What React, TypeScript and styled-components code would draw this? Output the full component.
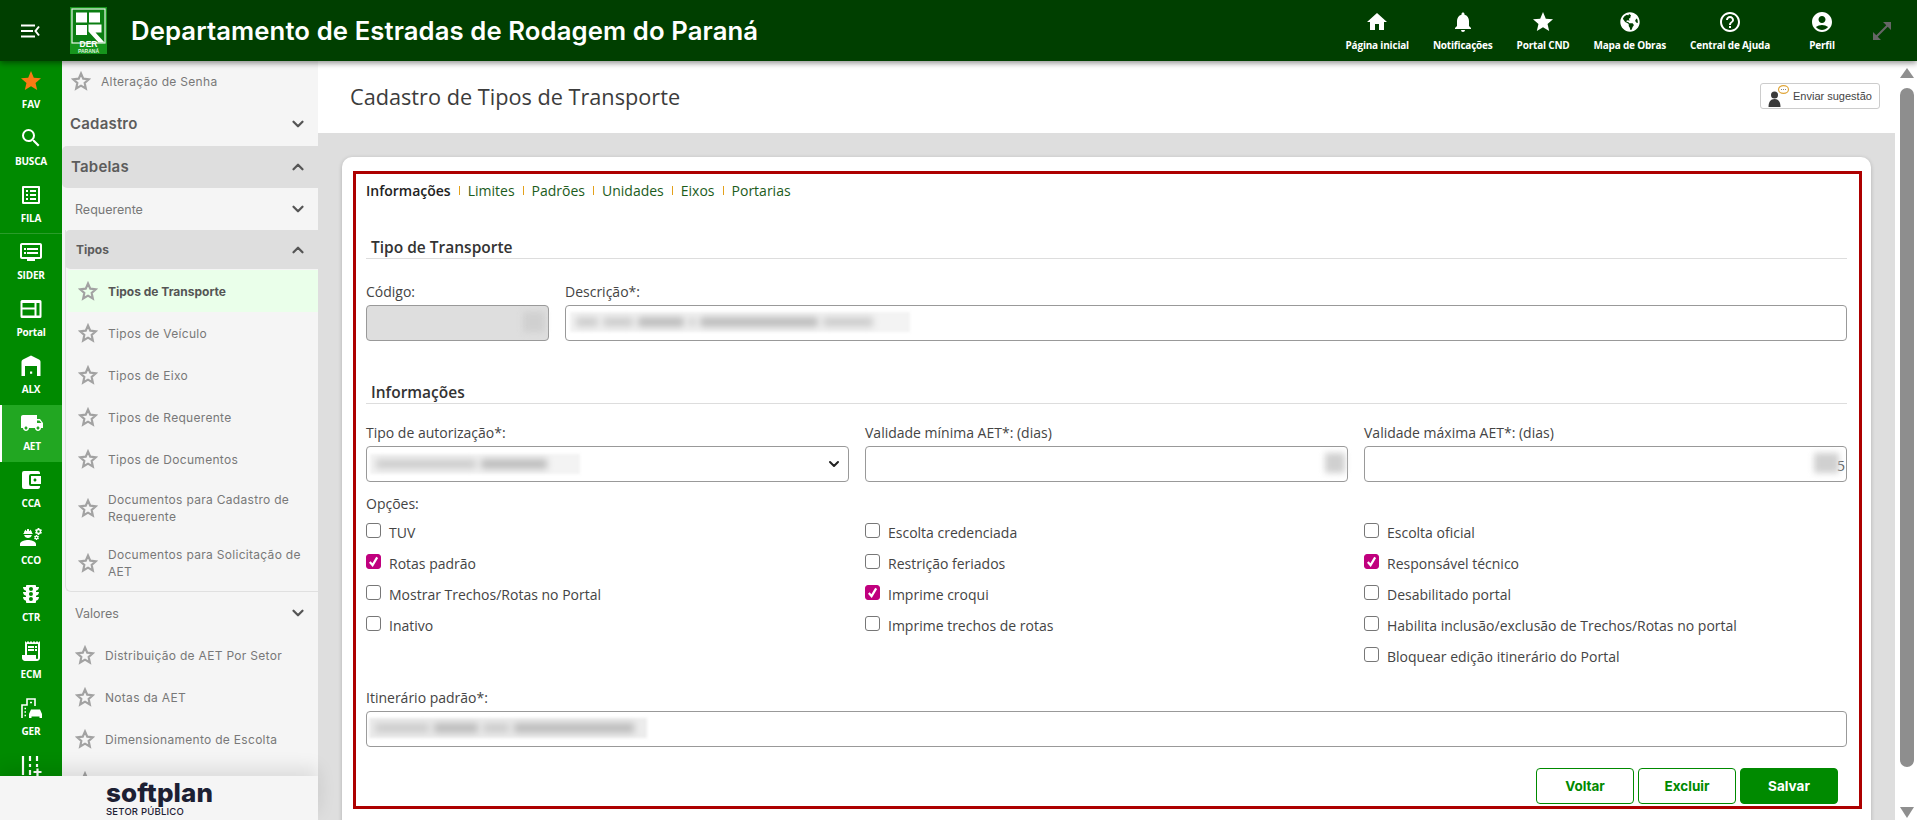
import React from "react";
import styled, { createGlobalStyle } from "styled-components";
import { ChevronDown, ChevronUp } from "lucide-react";
import {
  MdHome, MdNotifications, MdStar, MdHelpOutline, MdAccountCircle, MdOpenInFull,
  MdSearch, MdOutlineListAlt, MdDvr, MdLocalShipping, MdAccountBalanceWallet, MdEngineering, MdTraffic, MdReceiptLong,
} from "react-icons/md";
import { FaGlobeAmericas } from "react-icons/fa";

const GREEN_DARK = "#003f00";
const GREEN = "#008a00";
const SANS = '"Open Sans", "Liberation Sans", sans-serif';
const WIDE = 'Inter, "Open Sans", sans-serif';

const Global = createGlobalStyle`
  html, body { margin: 0; height: 100%; overflow: hidden; background: #fff; }
  * { box-sizing: border-box; }
  body { font-family: ${SANS}; }
`;

const Page = styled.div`
  width: 100%; height: 100vh; display: flex; flex-direction: column; overflow: hidden;
`;
const Header = styled.header`
  height: 61px; flex: none; background: ${GREEN_DARK}; display: flex; align-items: center;
  padding-right: 23px; position: relative; z-index: 5; box-shadow: 0 2px 6px rgba(0,0,0,.45);
`;
const MenuButton = styled.div`
  width: 70px; padding-left: 20px; display: flex; align-items: center; flex: none;
`;
const Brand = styled.h1`
  margin: 0 0 0 24px; font: 600 25.7px/30px ${WIDE}; color: #fff; white-space: nowrap; letter-spacing: 0.1px; flex: 1;
`;
const TopNav = styled.nav`
  display: flex; align-items: flex-start; gap: 24px;
`;
const TopItem = styled.div<{ $wide?: boolean }>`
  display: flex; flex-direction: column; align-items: center; color: #fff;
  min-width: ${p => (p.$wide ? "64px" : "0")}; margin-left: ${p => (p.$wide ? "-4px" : "0")};
  svg { display: block; height: 24px; width: 24px; }
`;
const TopLabel = styled.span`
  font: 700 10px/14px ${SANS}; margin-top: 4px; white-space: nowrap; letter-spacing: -0.2px;
`;
const ExpandIcon = styled.div`
  margin-left: 16px; color: #666; display: flex;
`;
const Body = styled.div`
  flex: 1; min-height: 0; display: flex;
`;
const LeftCol = styled.aside`
  width: 318px; flex: none; display: flex; flex-direction: column; background: #f5f5f5;
`;
const LeftTop = styled.div`
  flex: 1; min-height: 0; display: flex; overflow: hidden;
`;
const Rail = styled.div`
  width: 62px; flex: none; background: ${GREEN}; padding-top: 2px; display: flex; flex-direction: column;
`;
const RailItem = styled.div<{ $active?: boolean; $sep?: boolean }>`
  height: 57px; flex: none; display: flex; flex-direction: column; align-items: center; padding-top: 6px;
  color: #fff; background: ${p => (p.$active ? "#22a722" : "transparent")};
  border-left: ${p => (p.$active ? "2px solid #fff" : "0")};
  border-bottom: ${p => (p.$sep ? "1px solid #2a9c2a" : "0")};
  svg { display: block; width: 24px; height: 24px; }
`;
const RailLabel = styled.span`
  font: 700 10px/12px ${SANS}; margin-top: 5px; letter-spacing: -0.2px;
`;
const Nav = styled.nav`
  flex: 1; min-width: 0; background: #f5f5f5; color: #777;
`;
const StarWrap = styled.span`
  flex: none; display: flex; margin-right: 10px; color: #a2a2a2;
`;
const NavRow = styled.div<{ $h?: number; $pad?: number; $selected?: boolean }>`
  height: ${p => p.$h ?? 42}px; display: flex; align-items: center; padding-left: ${p => p.$pad ?? 11}px;
  padding-right: 8px; font: ${p => (p.$selected ? 700 : 400)} 12px/17px ${WIDE}; letter-spacing: ${p => (p.$selected ? "0" : "0.3px")};
  color: ${p => (p.$selected ? "#555" : "#787878")};
  background: ${p => (p.$selected ? "#eaffea" : "transparent")};
`;
const FirstRow = styled(NavRow)`
  padding-bottom: 2px;
`;
const NavHead = styled.div<{ $h: number; $big?: boolean; $open?: boolean; $pad: number; $strong?: boolean; $lift?: number }>`
  height: ${p => p.$h}px; display: flex; align-items: center; justify-content: space-between;
  padding: 0 11px ${p => p.$lift ?? 0}px ${p => p.$pad}px;
  background: ${p => (p.$open ? "#dedede" : "transparent")};
  border-radius: ${p => (p.$open ? "5px 0 0 5px" : "0")};
  color: ${p => (p.$big || p.$strong ? "#5c5c5c" : "#787878")};
  font: ${p => (p.$big ? "600 15px/20px" : p.$strong ? "700 12px/17px" : "400 12.5px/17px")} ${WIDE};
  letter-spacing: ${p => (p.$big ? "0.2px" : "0")};
  svg { color: #555; flex: none; }
`;
const Indented = styled.div`
  margin-left: 2px;
`;
const Group = styled.div`
  margin-left: 1px; border-left: 1px solid #e0e0e0; border-bottom: 1px solid #e0e0e0;
  border-bottom-left-radius: 6px; padding: 0 0 1px 2px;
`;
const GroupHead = styled.div`
  margin-left: -3px; padding-bottom: 1px;
`;
const Footer = styled.div`
  height: 44px; flex: none; background: #f5f5f5; padding: 5px 0 0 106px; position: relative; z-index: 2;
  box-shadow: 0 -8px 18px rgba(0,0,0,.1);
`;
const LogoWord = styled.div`
  font: 800 26px/24px ${WIDE}; color: #1c2033; letter-spacing: 0.1px; height: 24px;
`;
const LogoSub = styled.div`
  font: 500 9.5px/12px ${WIDE}; color: #1c2033; letter-spacing: 0.2px; margin-top: 1px;
`;
const Main = styled.main`
  flex: 1; min-width: 0; display: flex;
`;
const Content = styled.div`
  flex: 1; min-width: 0; display: flex; flex-direction: column; overflow: hidden;
`;
const TitleBand = styled.div`
  height: 72px; flex: none; display: flex; align-items: center; justify-content: space-between; background: #fff;
  padding: 0 15px 0 32px;
`;
const PageTitle = styled.h2`
  margin: 0; font: 500 21.7px/28px ${SANS}; color: #3c3c3c;
`;
const SuggestButton = styled.button`
  width: 120px; height: 26px; margin-top: -2px; display: flex; align-items: center; gap: 2px; padding: 0 0 0 6px;
  background: #fff; border: 1px solid #ccc; border-radius: 3px; color: #444;
  font: 400 11px/14px "Liberation Sans", Arial, sans-serif; white-space: nowrap;
`;
const GrayArea = styled.div`
  flex: 1; min-height: 0; background: #dedede; padding: 24px 24px 0;
`;
const Card = styled.section`
  background: #fff; border-radius: 10px 10px 0 0; padding: 14px 9px 30px 11px; box-shadow: 0 1px 4px rgba(0,0,0,.2);
`;
const RedBox = styled.div`
  border: 3px solid #ad0000; padding: 7px 12px 2px 10px;
`;
const Tabs = styled.div`
  display: flex; align-items: center; height: 20px; font: 400 14px/20px ${SANS};
`;
const Tab = styled.span<{ $active?: boolean }>`
  color: ${p => (p.$active ? "#222" : "#1c5c1c")}; font-weight: ${p => (p.$active ? 600 : 400)};
`;
const TabSep = styled.span`
  width: 1px; height: 9px; background: #e4a11b; margin: 0 8px; position: relative; top: -1px;
`;
const SectionTitle = styled.h3<{ $top: number }>`
  margin: ${p => p.$top}px 0 0; height: 23px; padding-left: 5px; border-bottom: 1px solid #ddd;
  font: 600 15.5px/22px ${SANS}; color: #333;
`;
const Row = styled.div`
  display: flex; gap: 16px;
`;
const ThreeCols = styled.div`
  display: grid; grid-template-columns: repeat(3, 1fr); gap: 16px;
`;
const Field = styled.div<{ $w?: number; $flex?: boolean; $top?: number }>`
  width: ${p => (p.$w ? `${p.$w}px` : "auto")}; flex: ${p => (p.$flex ? 1 : "none")}; min-width: 0;
  margin-top: ${p => p.$top ?? 0}px;
`;
const Label = styled.label`
  display: block; font: 400 14px/20px ${SANS}; color: #444; height: 23px; white-space: nowrap;
`;
const InputWrap = styled.div`
  position: relative; height: 36px;
`;
const Input = styled.input<{ $disabled?: boolean }>`
  width: 100%; height: 36px; display: block; border: 1px solid #999; border-radius: 4px; outline: 0; padding: 2px 1px 0 8px;
  background: ${p => (p.$disabled ? "#dedede" : "#fff")}; font: 400 14px/20px ${SANS}; color: #555; text-align: right;
`;
const SelectBox = styled.div`
  height: 36px; border: 1px solid #999; border-radius: 4px; display: flex; align-items: center; justify-content: space-between;
  padding: 0 6px 0 3px; color: #222; position: relative;
`;
const Smudge = styled.div<{ $left?: number; $right?: number; $w: number; $bg?: string; $soft?: boolean }>`
  position: absolute; top: 7px; height: 20px; width: ${p => p.$w}px;
  left: ${p => (p.$left !== undefined ? `${p.$left}px` : "auto")};
  right: ${p => (p.$right !== undefined ? `${p.$right}px` : "auto")};
  background: ${p => p.$bg ?? "#f3f3f3"}; display: flex; align-items: center; gap: 5px; padding: 0 6px; overflow: hidden;
  filter: blur(${p => (p.$soft ? 3 : 1.5)}px);
`;
const Blot = styled.span<{ $w: number; $dark?: boolean }>`
  flex: none; width: ${p => p.$w}px; height: 10px; background: ${p => (p.$dark ? "#bdbdbd" : "#cecece")}; filter: blur(3px);
`;
const Check = styled.div`
  height: 31px; display: flex; align-items: center; font: 400 14px/20px ${SANS}; color: #444;
`;
const Box = styled.span<{ $on?: boolean }>`
  width: 15px; height: 15px; flex: none; margin: -5px 8px 0 0; border-radius: 3px;
  border: 1px solid ${p => (p.$on ? "#c0007e" : "#777")}; background: ${p => (p.$on ? "#c0007e" : "#fff")};
  display: flex; align-items: center; justify-content: center;
`;
const Actions = styled.div`
  display: flex; justify-content: flex-end; gap: 4px; margin: 21px 9px 0 0;
`;
const ActionButton = styled.button<{ $primary?: boolean }>`
  width: 98px; height: 36px; border: 1px solid ${GREEN}; border-radius: 4px; padding: 0;
  background: ${p => (p.$primary ? GREEN : "#fff")}; color: ${p => (p.$primary ? "#fff" : GREEN)};
  font: 700 13.5px/18px ${WIDE};
`;
const Scrollbar = styled.div`
  width: 22px; flex: none; background: #fff; display: flex; flex-direction: column; align-items: flex-start; padding: 7px 0 2px 5px;
`;
const ArrowUp = styled.span`
  width: 0; height: 0; border: 7.5px solid transparent; border-top: 0; border-bottom: 10px solid #8f8f8f;
`;
const ArrowDown = styled.span`
  width: 0; height: 0; border: 7.5px solid transparent; border-bottom: 0; border-top: 11px solid #8f8f8f; margin-top: auto;
`;
const Thumb = styled.div`
  width: 14px; height: 679px; margin-top: 10px; border-radius: 7px; background: #8e8e8e;
`;

const Star = () => (
  <svg width="20" height="20" viewBox="0 0 24 24" fill="none" stroke="currentColor" strokeWidth="2.6" strokeLinejoin="miter">
    <polygon points="12,3 14.7,9.2 21.4,9.9 16.4,14.4 17.8,21 12,17.6 6.2,21 7.6,14.4 2.6,9.9 9.3,9.2" />
  </svg>
);

const MenuIcon = () => (
  <svg width="20" height="16" viewBox="0 0 20 16" fill="none" stroke="#fff" strokeWidth="2">
    <path d="M1 2.5h14M1 8h12M1 13.5h14" />
    <path d="M19 3.5 15.5 8l3.5 4.5" />
  </svg>
);

const DerLogo = () => (
  <svg width="37" height="47" viewBox="0 0 37 47" style={{ flex: "none" }}>
    <rect width="37" height="47" fill="#16951c" />
    <rect x="2" y="2" width="33" height="34" fill="#0b7d12" stroke="#e8f6e8" strokeWidth="1.2" />
    <rect x="6" y="5.500" width="11" height="10" fill="#fff" />
    <rect x="19" y="5.500" width="11" height="10" fill="#fff" />
    <rect x="6" y="18" width="11" height="10" fill="#fff" />
    <path d="M18.500 17.500h13v8h-6l9 10h-6l-10-11z" fill="#fff" />
    <text x="18.5" y="40" textAnchor="middle" fontFamily="Liberation Sans" fontWeight="700" fontSize="8.5" fill="#fff">DER</text>
    <text x="18.5" y="46" textAnchor="middle" fontFamily="Liberation Sans" fontWeight="700" fontSize="5" fill="#dff2df">PARANÁ</text>
  </svg>
);

const PortalIcon = () => (
  <svg viewBox="0 0 24 24" fill="#fff">
    <path fillRule="evenodd" d="M3 3h18a1.500 1.500 0 0 1 1.500 1.500v15A1.500 1.500 0 0 1 21 21H3a1.500 1.500 0 0 1-1.500-1.500v-15A1.500 1.500 0 0 1 3 3zm.500 3v4.500h12V6zm0 6.500v6h12v-6zm14-6.500v12.500h3V6z" />
  </svg>
);
const WarehouseIcon = () => (
  <svg viewBox="0 0 24 24" fill="#fff">
    <path fillRule="evenodd" d="M12 1.500 20 5.500c1 .5 1.500 1.500 1.500 2.500v14h-3.500v-10H6v10H2.500V8c0-1 .5-2 1.500-2.500zM11 17.500h2.200v2.200H11z" />
  </svg>
);
const GerIcon = () => (
  <svg viewBox="0 0 24 24" fill="none" stroke="#fff" strokeWidth="1.6">
    <path d="M3 22V9h5V3h8v7" />
    <path d="M5.500 12.500h1.500M5.500 16h1.500M5.500 19.500h1.500M11 6.500h2" />
    <path fill="#fff" stroke="none" d="M12 13.500h9l2 4.500v4h-2.500v-1.500h-8V22H10v-4z" />
  </svg>
);
const SlidersIcon = () => (
  <svg viewBox="0 0 24 24" fill="none" stroke="#fff" strokeWidth="2.200">
    <path d="M4 3v19M11 3v5M11 11v3M11 17v5M18 3v5M18 11v3M14.500 19h8M18.500 15.500v8" />
  </svg>
);
const SuggestIcon = () => (
  <svg width="24" height="24" viewBox="0 0 24 24" style={{ flex: "none" }}>
    <circle cx="7.500" cy="11" r="3.500" fill="#3a3a3a" />
    <path d="M1.500 23c0-5 2-8 6-8s6 3 6 8z" fill="#3a3a3a" />
    <ellipse cx="16.500" cy="5.500" rx="5" ry="3.800" fill="#fff" stroke="#e0a63a" strokeWidth="1.200" />
    <path d="M14 5.500h5" stroke="#888" strokeWidth="1" strokeDasharray="1 1" />
  </svg>
);
const CheckMark = () => (
  <svg width="11" height="11" viewBox="0 0 12 12" fill="none" stroke="#fff" strokeWidth="2.400">
    <path d="M2 6.500 5 10l5-8.500" />
  </svg>
);

const topItems = [
  { label: "Página inicial", icon: <MdHome /> },
  { label: "Notificações", icon: <MdNotifications /> },
  { label: "Portal CND", icon: <MdStar /> },
  { label: "Mapa de Obras", icon: <FaGlobeAmericas style={{ padding: 2 }} /> },
  { label: "Central de Ajuda", icon: <MdHelpOutline /> },
  { label: "Perfil", icon: <MdAccountCircle />, wide: true },
];

const railItems: { label: string; icon: React.ReactNode; sep?: boolean; active?: boolean }[] = [
  { label: "FAV", icon: <MdStar color="#f97a14" /> },
  { label: "BUSCA", icon: <MdSearch /> },
  { label: "FILA", icon: <MdOutlineListAlt />, sep: true },
  { label: "SIDER", icon: <MdDvr /> },
  { label: "Portal", icon: <PortalIcon /> },
  { label: "ALX", icon: <WarehouseIcon /> },
  { label: "AET", icon: <MdLocalShipping />, active: true },
  { label: "CCA", icon: <MdAccountBalanceWallet /> },
  { label: "CCO", icon: <MdEngineering /> },
  { label: "CTR", icon: <MdTraffic /> },
  { label: "ECM", icon: <MdReceiptLong /> },
  { label: "GER", icon: <GerIcon /> },
  { label: "", icon: <SlidersIcon /> },
];

const typeRows = [
  { t: "Tipos de Transporte", selected: true },
  { t: "Tipos de Veículo" },
  { t: "Tipos de Eixo" },
  { t: "Tipos de Requerente" },
  { t: "Tipos de Documentos" },
  { t: "Documentos para Cadastro de Requerente", h: 55 },
  { t: "Documentos para Solicitação de AET", h: 55 },
];

const col1: [string, boolean][] = [["TUV", false], ["Rotas padrão", true], ["Mostrar Trechos/Rotas no Portal", false], ["Inativo", false]];
const col2: [string, boolean][] = [["Escolta credenciada", false], ["Restrição feriados", false], ["Imprime croqui", true], ["Imprime trechos de rotas", false]];
const col3: [string, boolean][] = [["Escolta oficial", false], ["Responsável técnico", true], ["Desabilitado portal", false], ["Habilita inclusão/exclusão de Trechos/Rotas no portal", false], ["Bloquear edição itinerário do Portal", false]];

const CheckColumn = ({ items }: { items: [string, boolean][] }) => (
  <div>
    {items.map(([t, on]) => (
      <Check key={t}>
        <Box $on={on}>{on && <CheckMark />}</Box>
        {t}
      </Check>
    ))}
  </div>
);

export default function App() {
  return (
    <Page>
      <Global />
      <Header>
        <MenuButton><MenuIcon /></MenuButton>
        <DerLogo />
        <Brand>Departamento de Estradas de Rodagem do Paraná</Brand>
        <TopNav>
          {topItems.map(i => (
            <TopItem key={i.label} $wide={i.wide}>
              {i.icon}
              <TopLabel>{i.label}</TopLabel>
            </TopItem>
          ))}
        </TopNav>
        <ExpandIcon><MdOpenInFull size={24} /></ExpandIcon>
      </Header>
      <Body>
        <LeftCol>
          <LeftTop>
            <Rail>
              {railItems.map((r, i) => (
                <RailItem key={i} $active={r.active} $sep={r.sep}>
                  {r.icon}
                  <RailLabel>{r.label}</RailLabel>
                </RailItem>
              ))}
            </Rail>
            <Nav>
              <FirstRow $pad={9}><StarWrap><Star /></StarWrap>Alteração de Senha</FirstRow>
              <NavHead $h={43} $big $pad={8} $lift={2}>Cadastro<ChevronDown size={18} strokeWidth={3} /></NavHead>
              <NavHead $h={42} $big $open $pad={9}>Tabelas<ChevronUp size={18} strokeWidth={3} /></NavHead>
              <NavHead $h={42} $pad={13}>Requerente<ChevronDown size={18} strokeWidth={3} /></NavHead>
              <Indented>
                <Group>
                  <GroupHead>
                    <NavHead $h={39} $open $strong $pad={11}>Tipos<ChevronUp size={18} strokeWidth={3} /></NavHead>
                  </GroupHead>
                  {typeRows.map(r => (
                    <NavRow key={r.t} $h={r.h} $selected={r.selected} $pad={10}>
                      <StarWrap><Star /></StarWrap><span>{r.t}</span>
                    </NavRow>
                  ))}
                </Group>
              </Indented>
              <NavHead $h={42} $pad={13}>Valores<ChevronDown size={18} strokeWidth={3} /></NavHead>
              <NavRow $pad={13}><StarWrap><Star /></StarWrap>Distribuição de AET Por Setor</NavRow>
              <NavRow $pad={13}><StarWrap><Star /></StarWrap>Notas da AET</NavRow>
              <NavRow $pad={13}><StarWrap><Star /></StarWrap>Dimensionamento de Escolta</NavRow>
              <NavRow $pad={13}><StarWrap><Star /></StarWrap></NavRow>
            </Nav>
          </LeftTop>
          <Footer>
            <LogoWord>softplan</LogoWord>
            <LogoSub>SETOR PÚBLICO</LogoSub>
          </Footer>
        </LeftCol>
        <Main>
          <Content>
            <TitleBand>
              <PageTitle>Cadastro de Tipos de Transporte</PageTitle>
              <SuggestButton><SuggestIcon />Enviar sugestão</SuggestButton>
            </TitleBand>
            <GrayArea>
              <Card>
                <RedBox>
                  <Tabs>
                    <Tab $active>Informações</Tab><TabSep />
                    <Tab>Limites</Tab><TabSep />
                    <Tab>Padrões</Tab><TabSep />
                    <Tab>Unidades</Tab><TabSep />
                    <Tab>Eixos</Tab><TabSep />
                    <Tab>Portarias</Tab>
                  </Tabs>
                  <SectionTitle $top={35}>Tipo de Transporte</SectionTitle>
                  <Row>
                    <Field $w={183} $top={23}>
                      <Label>Código:</Label>
                      <InputWrap>
                        <Input $disabled readOnly />
                        <Smudge $right={4} $w={22} $bg="#d0d0d0" $soft />
                      </InputWrap>
                    </Field>
                    <Field $flex $top={23}>
                      <Label>Descrição*:</Label>
                      <InputWrap>
                        <Input readOnly />
                        <Smudge $left={5} $w={340}>
                          <Blot $w={22} /><Blot $w={30} /><Blot $w={46} $dark /><Blot $w={6} /><Blot $w={118} $dark /><Blot $w={50} />
                        </Smudge>
                      </InputWrap>
                    </Field>
                  </Row>
                  <SectionTitle $top={40}>Informações</SectionTitle>
                  <ThreeCols>
                    <Field $top={19}>
                      <Label>Tipo de autorização*:</Label>
                      <SelectBox>
                        <Smudge $left={3} $w={210}>
                          <Blot $w={100} /><Blot $w={66} $dark />
                        </Smudge>
                        <span />
                        <ChevronDown size={16} strokeWidth={3} />
                      </SelectBox>
                    </Field>
                    <Field $top={19}>
                      <Label>Validade mínima AET*: (dias)</Label>
                      <InputWrap>
                        <Input readOnly />
                        <Smudge $right={3} $w={20} $bg="#d0d0d0" $soft />
                      </InputWrap>
                    </Field>
                    <Field $top={19}>
                      <Label>Validade máxima AET*: (dias)</Label>
                      <InputWrap>
                        <Input readOnly value="5" />
                        <Smudge $right={8} $w={25} $bg="#d0d0d0" $soft />
                      </InputWrap>
                    </Field>
                  </ThreeCols>
                  <Field $top={12}>
                    <Label>Opções:</Label>
                  </Field>
                  <ThreeCols>
                    <CheckColumn items={col1} />
                    <CheckColumn items={col2} />
                    <CheckColumn items={col3} />
                  </ThreeCols>
                  <Field $top={16}>
                    <Label>Itinerário padrão*:</Label>
                    <InputWrap>
                      <Input readOnly />
                      <Smudge $left={3} $w={278} $bg="#ececec">
                        <Blot $w={54} /><Blot $w={44} $dark /><Blot $w={26} /><Blot $w={120} $dark />
                      </Smudge>
                    </InputWrap>
                  </Field>
                  <Actions>
                    <ActionButton>Voltar</ActionButton>
                    <ActionButton>Excluir</ActionButton>
                    <ActionButton $primary>Salvar</ActionButton>
                  </Actions>
                </RedBox>
              </Card>
            </GrayArea>
          </Content>
          <Scrollbar>
            <ArrowUp />
            <Thumb />
            <ArrowDown />
          </Scrollbar>
        </Main>
      </Body>
    </Page>
  );
}
